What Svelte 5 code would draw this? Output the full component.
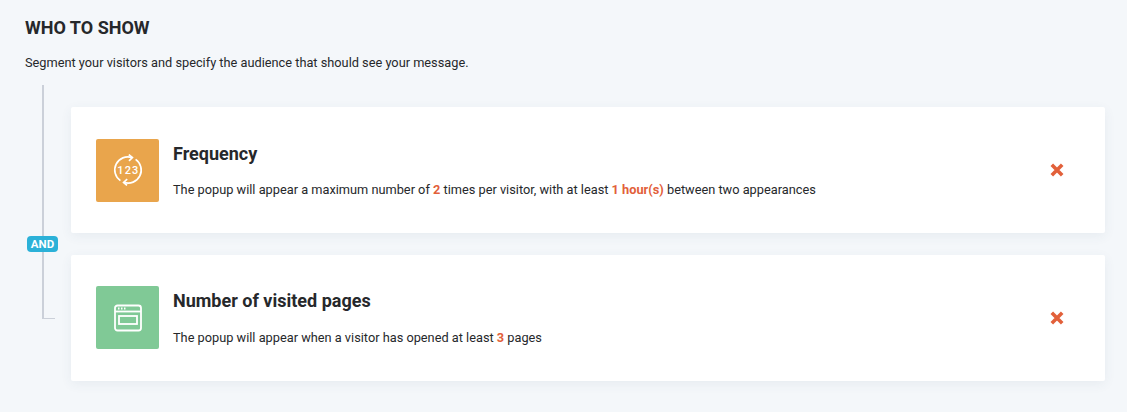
<script>
    const rules = [
        {
            title: "Frequency",
            color: "#e9a54c",
            icon: "frequency",
            parts: [
                { text: "The popup will appear a maximum number of " },
                { text: "2", hot: true },
                { text: " times per visitor, with at least " },
                { text: "1 hour(s)", hot: true },
                { text: " between two appearances" }
            ]
        },
        {
            title: "Number of visited pages",
            color: "#80c996",
            icon: "pages",
            parts: [
                { text: "The popup will appear when a visitor has opened at least " },
                { text: "3", hot: true },
                { text: " pages" }
            ]
        }
    ];
</script>

<div class="page">
    <h2 class="title">WHO TO SHOW</h2>
    <p class="lead">Segment your visitors and specify the audience that should see your message.</p>

    <div class="rules">
        <div class="rail"></div>
        <span class="and">AND</span>

        {#each rules as rule}
            <div class="card">
                <div class="icon" style="background-color: {rule.color}">
                    {#if rule.icon == "frequency"}
                        <svg width="32" height="32" viewBox="-1 -1 32 32" fill="none" stroke="#fff" stroke-width="1.7">
                            <path d="M22.6 4.4A13 13 0 0 1 11 27.4" />
                            <path d="M7.4 25.6A13 13 0 0 1 19 2.6" />
                            <path d="M15.8 -0.4 19.4 2.6 16 5.8" />
                            <path d="M14.2 24.2 10.6 27.4 14 30.4" />
                            <text x="15.4" y="19" text-anchor="middle" class="digits">123</text>
                        </svg>
                    {:else}
                        <svg width="28" height="28" viewBox="0 0 28 28" fill="none" stroke="#fff" stroke-width="1.8">
                            <rect x="1" y="1.5" width="26" height="25" rx="2.5" />
                            <path d="M1 7.5H27" />
                            <path d="M4 4.5H5.5M7 4.5H8.5M10 4.5H11.5" />
                            <rect x="5" y="12" width="18" height="8" />
                        </svg>
                    {/if}
                </div>
                <div class="body">
                    <h3 class="name">{rule.title}</h3>
                    <p class="desc">
                        {#each rule.parts as part}{#if part.hot}<b>{part.text}</b>{:else}{part.text}{/if}{/each}
                    </p>
                </div>
                <button class="remove" aria-label="Remove">
                    <svg width="14" height="14" viewBox="0 0 14 14" stroke="#e2603a" stroke-width="3.6">
                        <path d="M1.8 1.8 12.2 12.2M12.2 1.8 1.8 12.2" />
                    </svg>
                </button>
            </div>
        {/each}
    </div>
</div>

<style>
    :global(body) {
        background-color: #f4f7fa;
    }

    .page {
        height: 412px;
        box-sizing: border-box;
        padding: 18px 22px 0 25px;
        font-family: Roboto, sans-serif;
        color: #26282b;
        overflow: hidden;
    }

    .title {
        margin: 0;
        font-size: 18px;
        line-height: 20px;
        font-weight: 700;
    }

    .lead {
        margin: 17px 0 0;
        font-size: 12.77px;
        line-height: 16px;
    }

    .rules {
        position: relative;
        margin-top: 36.25px;
        padding-left: 46px;
        display: flex;
        flex-direction: column;
        gap: 21.5px;
    }

    .rail {
        position: absolute;
        left: 17px;
        top: -22.25px;
        width: 13px;
        height: 234px;
        box-sizing: border-box;
        border-left: 2px solid #cbd0d9;
        border-bottom: 1px solid #cbd0d9;
    }

    .and {
        position: absolute;
        left: 2px;
        top: 129px;
        width: 31px;
        height: 16px;
        border-radius: 4px;
        background-color: #2bb1d8;
        color: #fff;
        font-size: 11.5px;
        font-weight: 700;
        line-height: 16px;
        text-align: center;
    }

    .card {
        height: 126px;
        box-sizing: border-box;
        padding: 0 41px 0 25px;
        display: flex;
        align-items: center;
        background-color: #fff;
        border-radius: 2px;
        box-shadow: 0 3px 12px rgba(60, 80, 110, 0.07);
    }

    .icon {
        width: 63px;
        height: 63px;
        flex: none;
        display: flex;
        align-items: center;
        justify-content: center;
        border-radius: 2px;
    }

    .digits {
        fill: #fff;
        stroke: none;
        font-family: Roboto, sans-serif;
        font-size: 11px;
        font-weight: 500;
        letter-spacing: 1.2px;
    }

    .body {
        flex: 1;
        margin-left: 14px;
    }

    .name {
        margin: 0;
        font-size: 18px;
        line-height: 22px;
        font-weight: 700;
    }

    .desc {
        margin: 17.5px 0 0;
        font-size: 12.77px;
        line-height: 16px;
    }

    .desc b {
        color: #e2603a;
        font-weight: 700;
    }

    .remove {
        padding: 0;
        border: 0;
        background: none;
        display: flex;
    }
</style>
